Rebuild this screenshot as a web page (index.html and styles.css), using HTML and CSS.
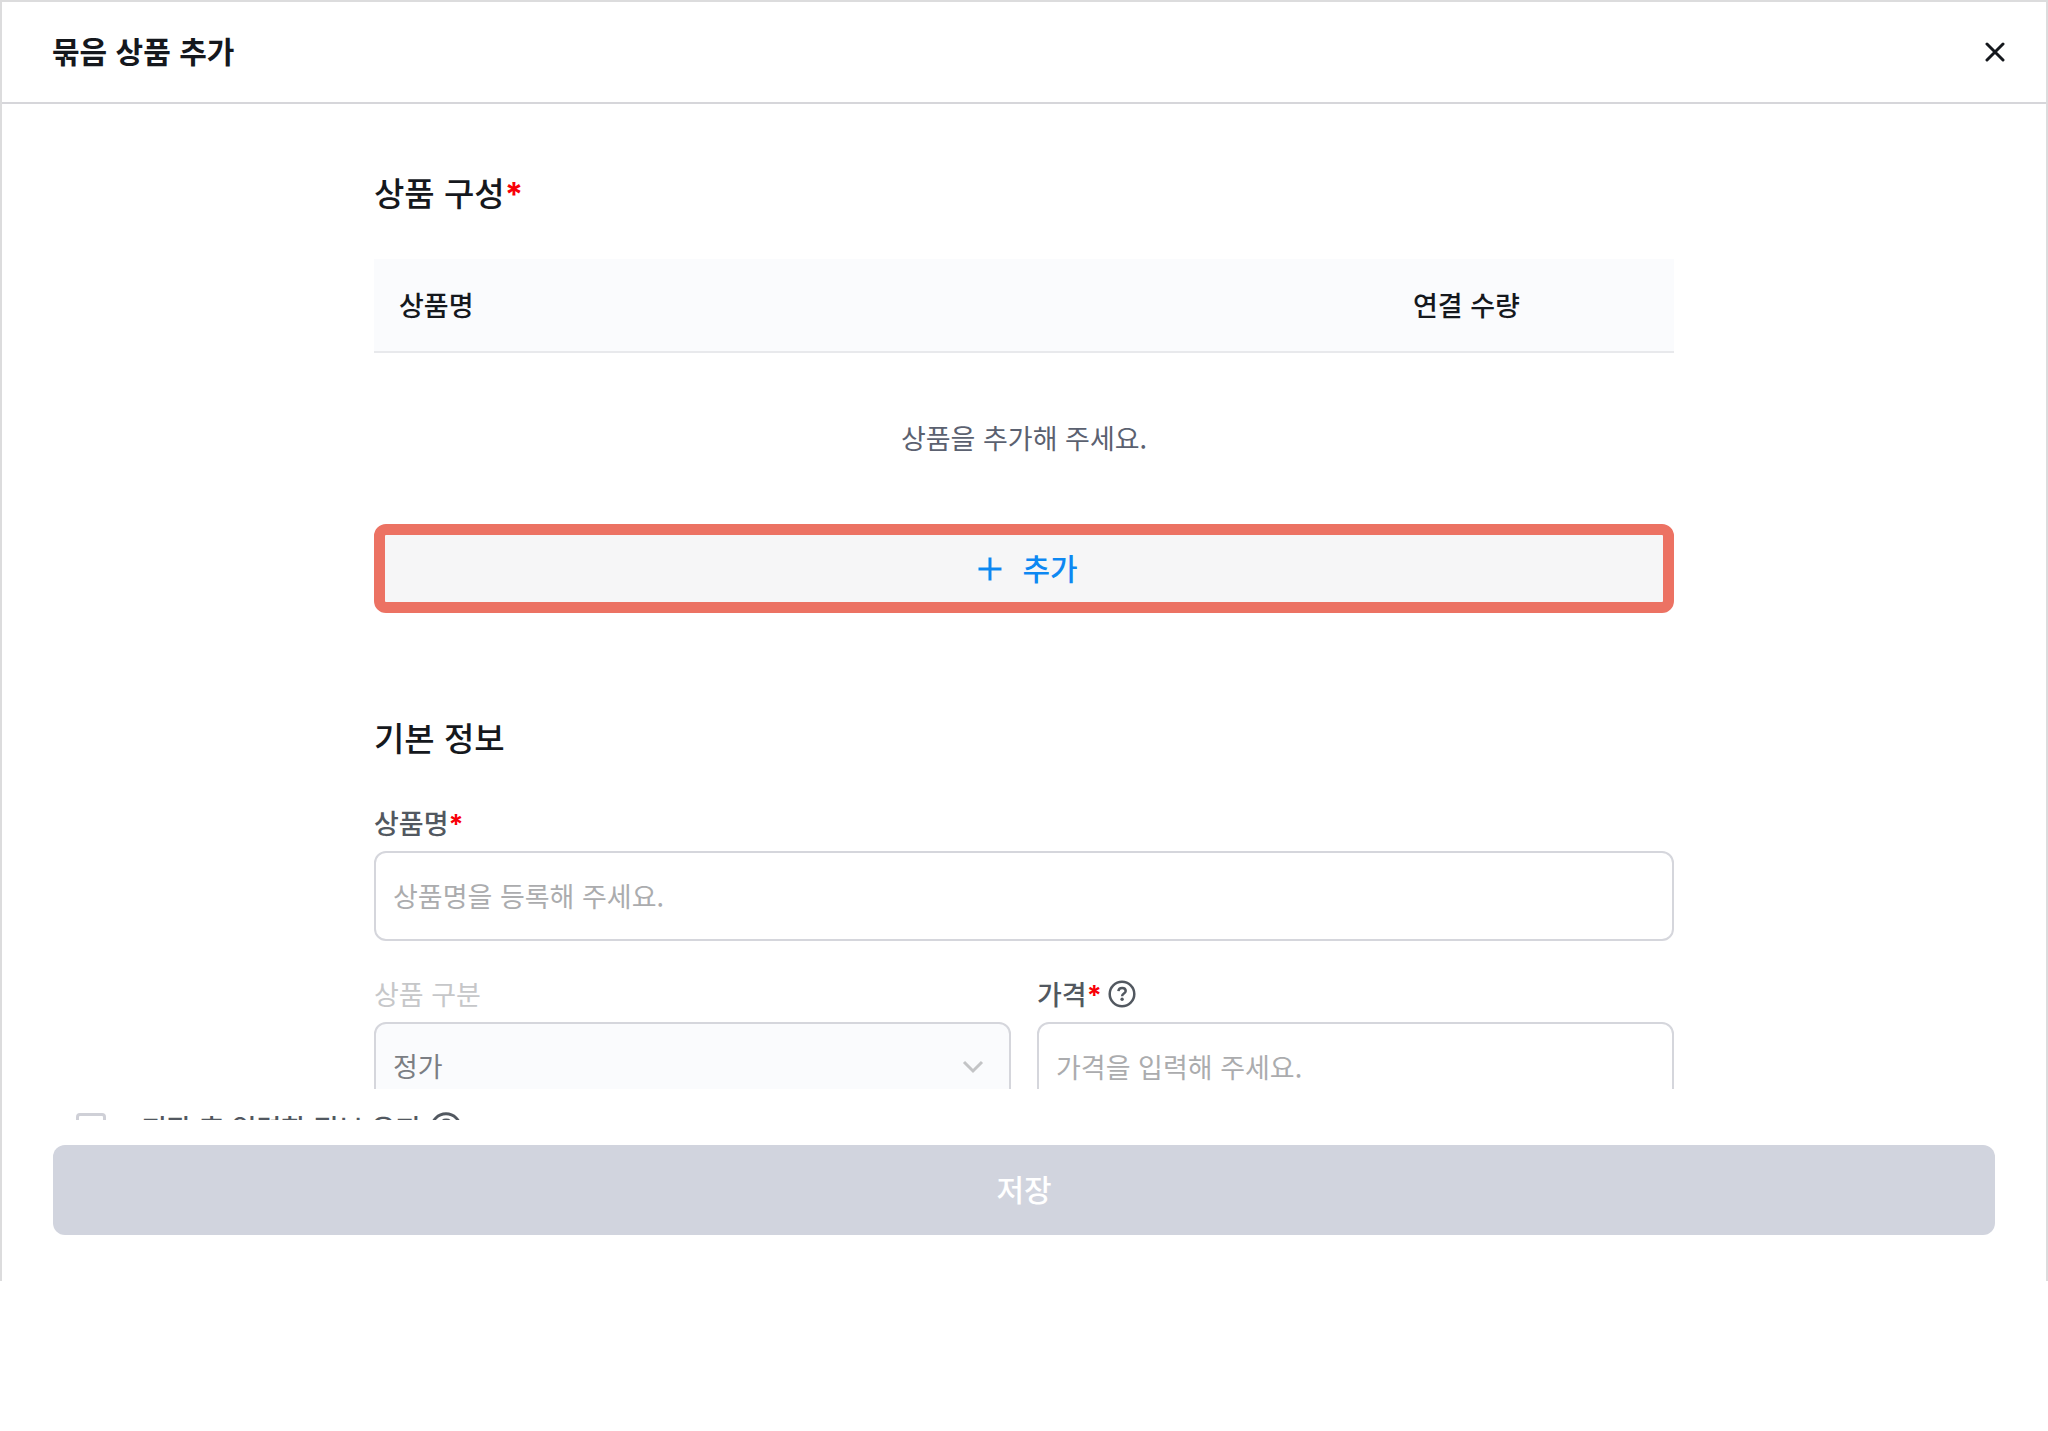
FILE: index.html
```html
<!DOCTYPE html>
<html lang="ko">
<head>
  <meta charset="utf-8">
  <meta name="viewport" content="width=device-width, initial-scale=1">
  <title>묶음 상품 추가</title>
  <link rel="stylesheet" href="styles.css">
</head>
<body>
  <main class="modal">
    <header class="modal-header">
      <h1 class="modal-title">묶음 상품 추가</h1>
      <button class="close-button" type="button" aria-label="닫기">
        <svg class="close-icon" viewBox="0 0 20 20" aria-hidden="true"><path d="M2 2l16 16M18 2L2 18"/></svg>
      </button>
    </header>

    <div class="modal-body">
      <div class="content">
        <section class="section">
          <h2 class="section-title">상품 구성<span class="required">*</span></h2>
          <table class="product-table">
            <thead>
              <tr><th scope="col">상품명</th><th class="quantity" scope="col">연결 수량</th></tr>
            </thead>
            <tbody>
              <tr><td class="empty" colspan="2">상품을 추가해 주세요.</td></tr>
            </tbody>
          </table>
          <button class="add-button" type="button">
            <svg class="add-icon" viewBox="0 0 32 32" aria-hidden="true"><path d="M16 4.500v23M4.500 16h23"/></svg>
            <span class="add-text">추가</span>
          </button>
        </section>

        <section class="section">
          <h2 class="section-title">기본 정보</h2>
          <div class="fields">
            <div class="field field-wide">
              <label class="label" for="name">상품명<span class="required">*</span></label>
              <input class="control" id="name" type="text" placeholder="상품명을 등록해 주세요.">
            </div>
            <div class="field">
              <label class="label label-disabled" for="kind">상품 구분</label>
              <div class="select-box">
                <select class="control" id="kind" disabled><option>정가</option></select>
                <svg class="chevron" viewBox="0 0 24 24" aria-hidden="true"><path d="M3 7l9 9 9-9"/></svg>
              </div>
            </div>
            <div class="field">
              <div class="label-row">
                <label class="label" for="price">가격<span class="required">*</span></label>
                <svg class="help-icon" viewBox="0 0 28 28" aria-hidden="true"><circle cx="14" cy="14" r="12.3"/><path d="M10.4 11.200c.2-2 1.700-3.200 3.700-3.200 2.100 0 3.600 1.200 3.600 3 0 2.600-3.600 2.500-3.600 5.200"/><circle class="dot" cx="14.100" cy="19.300" r="1.700"/></svg>
              </div>
              <input class="control" id="price" type="text" placeholder="가격을 입력해 주세요.">
            </div>
          </div>
        </section>
      </div>
    </div>

    <footer class="modal-footer">
      <div class="keep-clip">
        <div class="keep-row">
          <input class="checkbox" id="keep" type="checkbox">
          <label class="keep-label" for="keep">저장 후 입력한 정보 유지</label>
          <svg class="help-icon help-large" viewBox="0 0 28 28" aria-hidden="true"><circle cx="14" cy="14" r="12.5"/><path d="M10.4 10.200c.2-2 1.700-3.200 3.700-3.200 2.100 0 3.600 1.200 3.600 3 0 2.600-3.600 2.500-3.600 5.200"/><circle class="dot" cx="14.100" cy="19.300" r="1.700"/></svg>
        </div>
      </div>
      <button class="save-button" type="submit" disabled>저장</button>
    </footer>
  </main>
</body>
</html>
```

FILE: styles.css
```css
* {
  box-sizing: border-box;
}

body {
  margin: 0;
  background: #fff;
  color: #15181d;
  font-family: "Noto Sans CJK KR", sans-serif;
  font-size: 27px;
  line-height: 38px;
}

button,
input,
select {
  margin: 0;
  font: inherit;
}

svg {
  flex: none;
  fill: none;
  stroke: currentColor;
}

.modal {
  display: flex;
  flex-direction: column;
  height: calc(100vh - 150px);
  border: 2px solid #dcdcdd;
  border-bottom: 0;
}

.modal-header {
  display: flex;
  align-items: center;
  justify-content: space-between;
  padding: 24px 41px 24px 50px;
  border-bottom: 2px solid #d6d6da;
}

.modal-title {
  margin: 0;
  padding-bottom: 4px;
  font-size: 30px;
  font-weight: 700;
  line-height: 48px;
}

.close-button {
  padding: 0;
  border: 0;
  background: none;
  color: #15181d;
}

.close-icon {
  display: block;
  width: 20px;
  height: 20px;
  stroke-width: 3;
  stroke-linecap: round;
}

.modal-body {
  flex: 1;
  min-height: 0;
  overflow: hidden;
}

.content {
  max-width: 1300px;
  margin: 0 auto;
  padding-top: 64px;
}

.section {
  margin-bottom: 100px;
}

.section-title {
  margin: 0 0 43px;
  font-size: 33px;
  font-weight: 500;
  line-height: 48px;
}

.required {
  color: #f80008;
  font-family: Inter, sans-serif;
  font-weight: 700;
  line-height: 1;
}

.product-table {
  width: 100%;
  border-collapse: separate;
  border-spacing: 0;
}

.product-table th {
  height: 94px;
  padding: 0 25px;
  border-bottom: 2px solid #e8e9ec;
  background: #fafbfd;
  font-weight: 500;
  text-align: left;
}

.product-table .quantity {
  width: 22%;
}

.product-table .empty {
  height: 171px;
  padding: 0 0 2px;
  color: #5b6170;
  text-align: center;
}

.add-button {
  display: flex;
  align-items: center;
  justify-content: center;
  gap: 16px;
  width: 100%;
  height: 89px;
  padding: 0 0 0 4px;
  border: 11px solid #ec7263;
  border-radius: 12px;
  background: #f6f6f7;
  color: #0d88f2;
  font-size: 30px;
  font-weight: 500;
}

.add-icon {
  width: 32px;
  height: 32px;
  stroke-width: 3;
}

.add-text {
  padding-bottom: 4px;
}

.fields {
  display: grid;
  grid-template-columns: 1fr 1fr;
  gap: 34px 26px;
}

.field {
  display: flex;
  flex-direction: column;
  gap: 9px;
  min-width: 0;
}

.field-wide {
  grid-column: 1 / -1;
}

.label-row {
  display: flex;
  align-items: center;
  gap: 6px;
}

.label {
  color: #525860;
  font-weight: 500;
}

.label-disabled {
  color: #c6c7c9;
  font-weight: 400;
}

.control {
  display: block;
  width: 100%;
  height: 90px;
  padding: 0 17px 2px;
  border: 2px solid #d5d6dc;
  border-radius: 12px;
  background: #fff;
  color: #15181d;
}

.control::placeholder {
  color: #abacae;
  opacity: 1;
}

.select-box {
  position: relative;
}

.select-box .control {
  appearance: none;
  background: #fafbfd;
  color: #7b7e84;
  opacity: 1;
}

.chevron {
  position: absolute;
  top: 33px;
  right: 26px;
  width: 24px;
  height: 24px;
  color: #c3c4c6;
  stroke-width: 3;
}

.help-icon {
  width: 28px;
  height: 28px;
  color: #525860;
  stroke-width: 2.5;
}

.help-icon .dot {
  fill: currentColor;
  stroke: none;
}

.modal-footer {
  padding: 23px 51px 46px;
}

.keep-clip {
  height: 8px;
  margin-bottom: 25px;
  overflow: hidden;
}

.keep-row {
  display: flex;
  align-items: center;
  height: 32px;
  padding-left: 23px;
}

.checkbox {
  appearance: none;
  width: 30px;
  height: 30px;
  margin-right: 36px;
  border: 3px solid #cfd0d7;
  border-radius: 4px;
}

.keep-label {
  margin-right: 9px;
  color: #525860;
  font-weight: 500;
}

.help-large {
  width: 32px;
  height: 32px;
}

.save-button {
  display: block;
  width: 100%;
  height: 90px;
  padding: 0 0 4px;
  border: 0;
  border-radius: 12px;
  background: #d1d4de;
  color: #fff;
  font-size: 30px;
  font-weight: 500;
}
```
